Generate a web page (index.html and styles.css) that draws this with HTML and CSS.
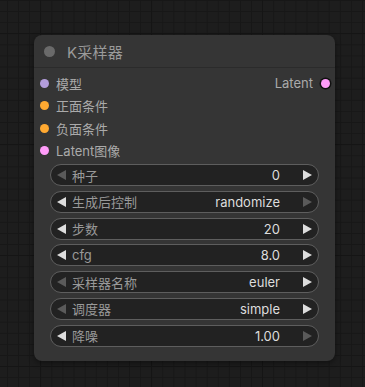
FILE: index.html
```html
<!DOCTYPE html>
<html>
<head>
<meta charset="utf-8">
<link rel="stylesheet" href="styles.css">
</head>
<body>
<div class="canvas">
  <div class="node">
    <div class="title">
      <span class="title-dot"></span>
      <span class="title-text">K采样器</span>
    </div>
    <div class="body">
      <div class="slots">
        <div class="slot-row">
          <div class="slot in"><span class="dot model"></span>模型</div>
          <div class="slot out">Latent<span class="dot latent outdot"></span></div>
        </div>
        <div class="slot-row">
          <div class="slot in"><span class="dot cond"></span>正面条件</div>
        </div>
        <div class="slot-row">
          <div class="slot in"><span class="dot cond"></span>负面条件</div>
        </div>
        <div class="slot-row">
          <div class="slot in"><span class="dot latent"></span>Latent图像</div>
        </div>
      </div>
      <div class="widgets">
        <div class="widget"><span class="arrow left off"></span><span class="label">种子</span><span class="value">0</span><span class="arrow right"></span></div>
        <div class="widget"><span class="arrow left"></span><span class="label">生成后控制</span><span class="value">randomize</span><span class="arrow right off"></span></div>
        <div class="widget"><span class="arrow left"></span><span class="label">步数</span><span class="value">20</span><span class="arrow right"></span></div>
        <div class="widget"><span class="arrow left"></span><span class="label">cfg</span><span class="value">8.0</span><span class="arrow right"></span></div>
        <div class="widget"><span class="arrow left off"></span><span class="label">采样器名称</span><span class="value">euler</span><span class="arrow right"></span></div>
        <div class="widget"><span class="arrow left off"></span><span class="label">调度器</span><span class="value">simple</span><span class="arrow right"></span></div>
        <div class="widget"><span class="arrow left"></span><span class="label">降噪</span><span class="value">1.00</span><span class="arrow right off"></span></div>
      </div>
    </div>
  </div>
</div>
</body>
</html>
```

FILE: styles.css
```css
html, body {
  margin: 0;
  padding: 0;
  width: 365px;
  height: 387px;
  overflow: hidden;
}
body {
  background-color: #1d1d1d;
  background-image:
    linear-gradient(to right, #151515 1px, transparent 1px),
    linear-gradient(to bottom, #151515 1px, transparent 1px),
    linear-gradient(to right, #171717 1px, transparent 1px),
    linear-gradient(to bottom, #171717 1px, transparent 1px);
  background-size: 111px 111px, 111px 111px, 11.1px 11.1px, 11.1px 11.1px;
  background-position: 40px 0, 0 33px, 7px 0, 0 0;
  font-family: "Inter", "Noto Sans CJK SC", sans-serif;
}
.canvas {
  display: flex;
  padding: 35px 0 0 34px;
}
.node {
  width: 301px;
  height: 326px;
  background: #353535;
  border-radius: 8px;
  box-shadow: 0 2px 6px rgba(0,0,0,0.45);
  display: flex;
  flex-direction: column;
  box-sizing: border-box;
}
.title {
  height: 33px;
  display: flex;
  align-items: center;
  border-bottom: 1px solid #2b2b2b;
  box-sizing: border-box;
  padding-left: 10px;
  padding-top: 1px;
}
.title-dot {
  width: 11px;
  height: 11px;
  border-radius: 50%;
  background: #6a6a6a;
}
.title-text {
  margin-left: 12px;
  color: #9a9a9a;
  font-size: 15px;
  letter-spacing: 0.2px;
}
.body {
  display: flex;
  flex-direction: column;
  padding-top: 4px;
}
.slots {
  display: flex;
  flex-direction: column;
}
.slot-row {
  height: 22.5px;
  display: flex;
  align-items: center;
  justify-content: space-between;
}
.slot {
  display: flex;
  align-items: center;
  color: #aaaaaa;
  font-size: 13px;
}
.slot.in {
  padding-left: 6px;
}
.slot.out {
  padding-right: 5px;
}
.dot {
  width: 9px;
  height: 9px;
  border-radius: 50%;
  margin-right: 7px;
}
.dot.model { background: #b39ddb; }
.dot.cond { background: #ffa931; }
.dot.latent { background: #ff9cf9; }
.dot.outdot {
  margin-right: 0;
  margin-left: 8px;
  box-shadow: 0 0 0 1.5px #111;
}
.widgets {
  display: flex;
  flex-direction: column;
  gap: 4.8px;
  padding: 2px 16px 0 16px;
}
.widget {
  height: 22px;
  box-sizing: border-box;
  border: 1px solid #5e5e5e;
  border-radius: 11px;
  background: #222222;
  display: flex;
  align-items: center;
  padding: 0 6px;
  font-size: 13px;
}
.arrow {
  width: 0;
  height: 0;
  border-top: 5px solid transparent;
  border-bottom: 5px solid transparent;
}
.arrow.left {
  border-right: 9px solid #dddddd;
}
.arrow.right {
  border-left: 9px solid #dddddd;
}
.arrow.left.off { border-right-color: #5a5a5a; }
.arrow.right.off { border-left-color: #5a5a5a; }
.label {
  margin-left: 6px;
  color: #999999;
  flex: 1;
}
.value {
  color: #dddddd;
  margin-right: 23px;
}
```
